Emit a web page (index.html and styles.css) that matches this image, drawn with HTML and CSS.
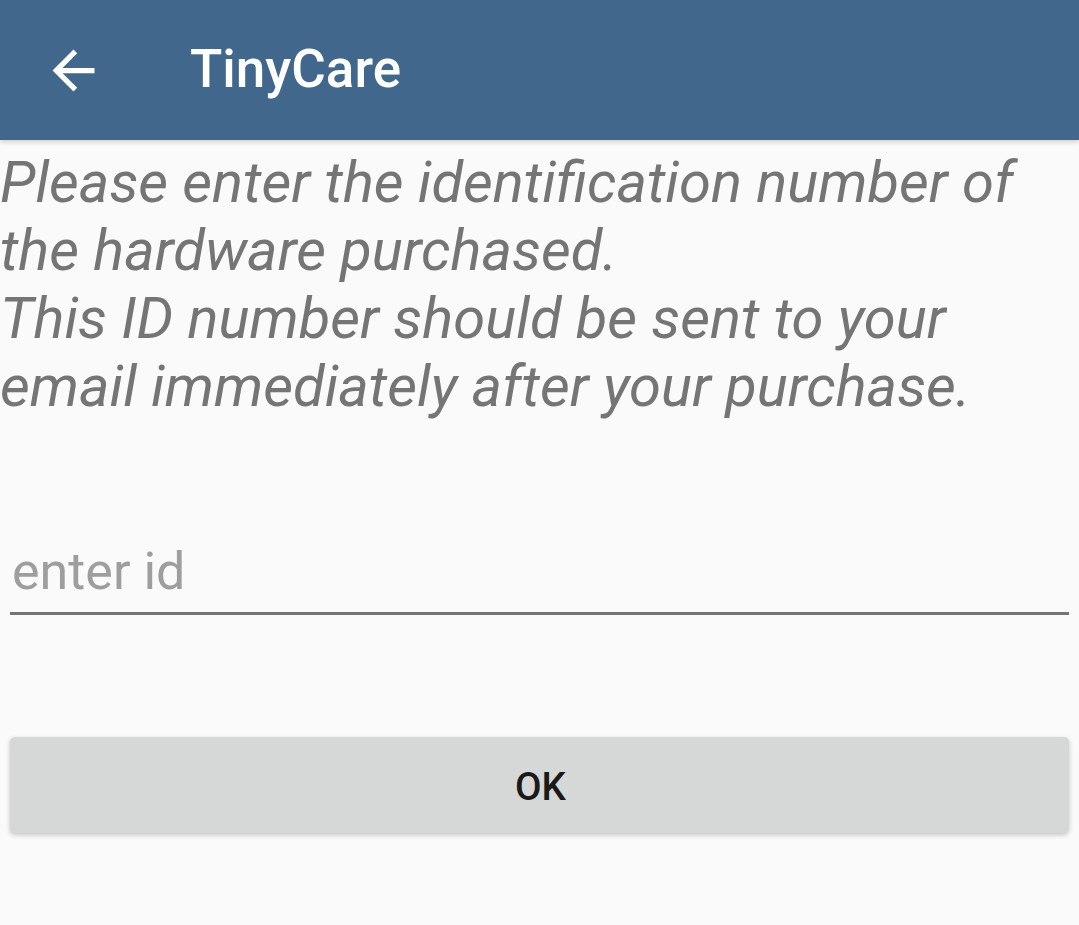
FILE: index.html
```html
<!DOCTYPE html>
<html>
<head>
<meta charset="utf-8">
<link rel="stylesheet" href="styles.css">
</head>
<body>
<header class="toolbar">
  <div class="nav-icon">
    <svg viewBox="0 0 24 24" width="63" height="63"><path d="M20 11H7.83l5.59-5.59L12 4l-8 8 8 8 1.41-1.41L7.83 13H20v-2z" fill="#ffffff"/></svg>
  </div>
  <h1 class="title">TinyCare</h1>
</header>
<main class="content">
  <p class="message">Please enter the identification number of the hardware purchased.<br>This ID number should be sent to your email immediately after your purchase.</p>
  <div class="field">
    <span class="hint">enter id</span>
  </div>
  <button class="ok-btn">OK</button>
</main>
</body>
</html>
```
FILE: styles.css
```css
html, body {
  margin: 0;
  padding: 0;
  background: #fafafa;
  font-family: Roboto, "Noto Sans", sans-serif;
  width: 1079px;
  height: 925px;
  overflow: hidden;
}
.toolbar {
  height: 140px;
  background: #41678d;
  display: flex;
  align-items: center;
  box-shadow: 0 2px 5px rgba(0,0,0,0.18);
  position: relative;
  z-index: 1;
}
.nav-icon {
  width: 63px;
  height: 63px;
  margin-left: 42px;
  display: flex;
}
.title {
  margin: 0 0 0 85px;
  color: #ffffff;
  font-size: 53px;
  font-weight: 500;
  line-height: 1;
  padding-bottom: 2px;
}
.content {
  display: flex;
  flex-direction: column;
}
.message {
  margin: 8px 0 0 0;
  color: #757575;
  font-style: italic;
  font-size: 57.9px;
  line-height: 68px;
}
.field {
  margin: 122px 10px 0 10px;
  border-bottom: 3px solid #757575;
  padding: 0 0 10px 2px;
}
.hint {
  color: #9e9e9e;
  font-size: 52px;
  line-height: 60px;
  display: block;
}
.ok-btn {
  margin: 122px 10px 0 10px;
  height: 96px;
  border: none;
  border-radius: 5px;
  background: #d6d7d7;
  box-shadow: 0 2px 5px rgba(0,0,0,0.22);
  font-family: Roboto, sans-serif;
  font-weight: 500;
  font-size: 38.5px;
  color: #1a1a1a;
  letter-spacing: 0;
  padding: 2px 0 0 2px;
}
```
